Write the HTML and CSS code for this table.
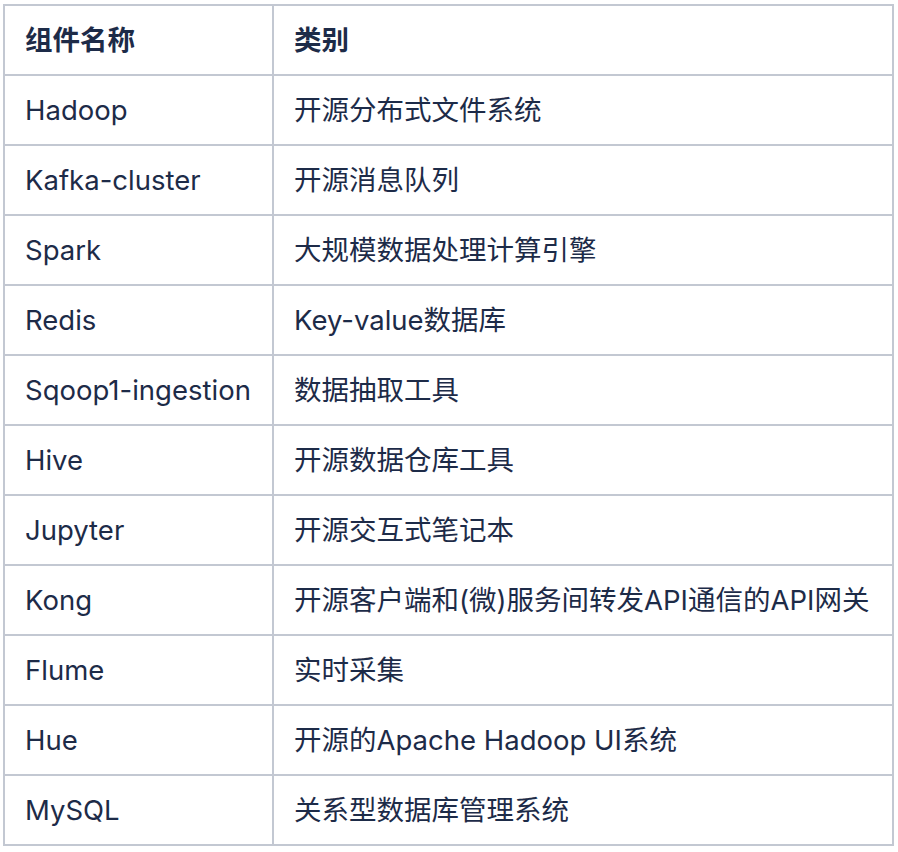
FILE: index.html
```html
<!DOCTYPE html>
<html lang="zh">
<head>
<meta charset="utf-8">
<link rel="stylesheet" href="styles.css">
</head>
<body>
<table class="grid">
  <colgroup><col class="c1"><col class="c2"></colgroup>
  <thead>
    <tr><th>组件名称</th><th>类别</th></tr>
  </thead>
  <tbody>
    <tr><td>Hadoop</td><td>开源分布式文件系统</td></tr>
    <tr><td>Kafka-cluster</td><td>开源消息队列</td></tr>
    <tr><td>Spark</td><td>大规模数据处理计算引擎</td></tr>
    <tr><td>Redis</td><td>Key-value数据库</td></tr>
    <tr><td>Sqoop1-ingestion</td><td>数据抽取工具</td></tr>
    <tr><td>Hive</td><td>开源数据仓库工具</td></tr>
    <tr><td>Jupyter</td><td>开源交互式笔记本</td></tr>
    <tr><td>Kong</td><td>开源客户端和(微)服务间转发API通信的API网关</td></tr>
    <tr><td>Flume</td><td>实时采集</td></tr>
    <tr><td>Hue</td><td>开源的Apache Hadoop UI系统</td></tr>
    <tr><td>MySQL</td><td>关系型数据库管理系统</td></tr>
  </tbody>
</table>
</body>
</html>
```
FILE: styles.css
```css
html, body {
  margin: 0;
  padding: 0;
  background: #ffffff;
}
body {
  padding: 4px 0 0 3px;
  font-family: Inter, "Noto Sans CJK SC", sans-serif;
  color: #1d2b48;
}
.grid {
  border-collapse: collapse;
  width: 891px;
  table-layout: fixed;
}
.c1 { width: 269px; }
.grid th, .grid td {
  border: 2px solid #c3c8d2;
  height: 68px;
  padding: 0 20px;
  text-align: left;
  font-size: 27.5px;
  line-height: 36px;
  white-space: nowrap;
}
.grid th {
  font-weight: 700;
}
.grid td {
  font-weight: 400;
}
```
